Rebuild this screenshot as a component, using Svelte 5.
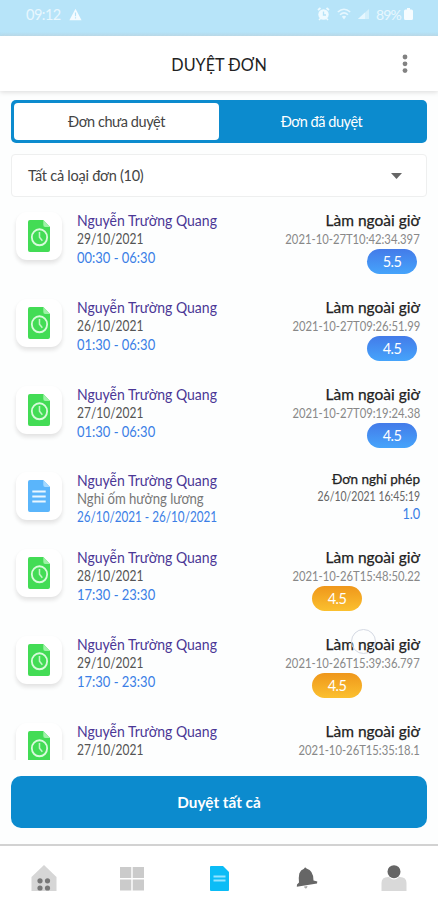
<script>
  const person = 'Nguyễn Trường Quang';
  const rows = [
    { date: '29/10/2021', time: '00:30 - 06:30', stamp: '2021-10-27T10:42:34.397', hours: '5.5', tone: 'blue' },
    { date: '26/10/2021', time: '01:30 - 06:30', stamp: '2021-10-27T09:26:51.99', hours: '4.5', tone: 'blue' },
    { date: '27/10/2021', time: '01:30 - 06:30', stamp: '2021-10-27T09:19:24.38', hours: '4.5', tone: 'blue' },
    { leave: true, date: 'Nghỉ ốm hưởng lương', time: '26/10/2021 - 26/10/2021', stamp: '26/10/2021 16:45:19', hours: '1.0' },
    { date: '28/10/2021', time: '17:30 - 23:30', stamp: '2021-10-26T15:48:50.22', hours: '4.5', tone: 'orange' },
    { date: '29/10/2021', time: '17:30 - 23:30', stamp: '2021-10-26T15:39:36.797', hours: '4.5', tone: 'orange', touch: true },
    { date: '27/10/2021', stamp: '2021-10-26T15:35:18.1' }
  ];
</script>

<div class="screen">
  <div class="status">
    <span class="clock">09:12</span>
    <svg class="warn" width="13" height="13" viewBox="0 0 13 13"><path d="M6.500 .8 12.600 12.200H.4Z" fill="#f4fbff" /><path d="M6.500 4.500V8.200M6.500 9.300v1.300" stroke="#b6e3f8" stroke-width="1.200" /></svg>
    <div class="signals">
      <svg width="13" height="14" viewBox="0 0 13 14"><path d="M1 3 3.500 1M12 3 9.500 1" stroke="#eefaff" stroke-width="1.800" /><circle cx="6.500" cy="7.500" r="5.200" fill="#eefaff" /><path d="M6.500 4.500V8H9" fill="none" stroke="#b6e3f8" stroke-width="1.300" /><path d="M2 13 4 11M11 13 9 11" stroke="#eefaff" stroke-width="1.500" /></svg>
      <svg width="14" height="12" viewBox="0 0 14 12"><g fill="none" stroke="#e6f7ff" stroke-width="1.500"><path d="M.8 4Q7-1.500 13.200 4" /><path d="M3 6.700Q7 3 11 6.700" /></g><path d="M4.800 8.500Q7 6.800 9.200 8.500L7 11.500Z" fill="#e6f7ff" /></svg>
      <svg width="11" height="12" viewBox="0 0 11 12"><path d="M0 11 11 1V11Z" fill="#d3effb" /><path d="M0 11 7 4.600V11Z" fill="#e6f7ff" /></svg>
      <span class="pct">89%</span>
      <svg width="9" height="12" viewBox="0 0 9 12"><path d="M3 0H6V1.500H7.500Q9 1.500 9 3V10.500Q9 12 7.500 12H1.500Q0 12 0 10.500V3Q0 1.500 1.500 1.500H3Z" fill="#f6fcff" /></svg>
    </div>
  </div>

  <header>
    <h1>DUYỆT ĐƠN</h1>
    <svg class="more" width="6" height="20" viewBox="0 0 6 20" fill="#828282"><circle cx="3" cy="3" r="2.400" /><circle cx="3" cy="9.800" r="2.400" /><circle cx="3" cy="16.600" r="2.400" /></svg>
  </header>

  <div class="tabs">
    <div class="tab active"><span>Đơn chưa duyệt</span></div>
    <div class="tab"><span>Đơn đã duyệt</span></div>
  </div>

  <div class="select">
    <span>Tất cả loại đơn (10)</span>
    <svg width="11" height="6" viewBox="0 0 11 6"><path d="M0 0H11L5.500 6Z" fill="#666" /></svg>
  </div>

  <div class="list">
    {#each rows as row}
      <div class="row" class:leave={row.leave}>
        <div class="tile">
          <svg width="22" height="32" viewBox="0 0 23 32" preserveAspectRatio="none">
            <path d="M2 0H16L23 7V30Q23 32 21 32H2Q0 32 0 30V2Q0 0 2 0Z" fill={row.leave ? '#5ab5fb' : '#43dc55'} />
            <path d="M16 0 23 7H18Q16 7 16 5Z" fill={row.leave ? '#a5d9ff' : '#a0f2a9'} />
            {#if row.leave}
              <path d="M4.500 11.500H18.500M4.500 16.500H18.500M4.500 21.500H18.500" stroke="#e9f7ff" stroke-width="2" />
            {:else}
              <circle cx="12" cy="17.300" r="8" fill="none" stroke="#d9fbdc" stroke-width="1.900" />
              <path d="M12 12V17.300L15 20.800" fill="none" stroke="#c4f6c9" stroke-width="1.600" />
            {/if}
          </svg>
        </div>
        <div class="info">
          <div class="name">{person}</div>
          <div class="date">{row.date}</div>
          {#if row.time}<div class="time">{row.time}</div>{/if}
        </div>
        <div class="meta">
          <div class="kind">{row.leave ? 'Đơn nghỉ phép' : 'Làm ngoài giờ'}{#if row.touch}<i class="touch"></i>{/if}</div>
          <div class="stamp">{row.stamp}</div>
          {#if row.leave}
            <div class="days">{row.hours}</div>
          {:else if row.hours}
            <div class="pill {row.tone}">{row.hours}</div>
          {/if}
        </div>
      </div>
    {/each}
  </div>

  <button>Duyệt tất cả</button>

  <nav>
    <div><svg width="26" height="27" viewBox="0 0 26 27"><path d="M13 0 25.500 12V26H.5V12Z" fill="#d6d6d6" /><g fill="#777"><circle cx="9" cy="15.800" r="2.600" /><circle cx="16.500" cy="15.800" r="2.600" /><circle cx="9" cy="23" r="2.600" /><circle cx="16.500" cy="23" r="2.600" /></g></svg></div>
    <div><svg width="24" height="27" viewBox="0 0 24 27" fill="#cbcbcb"><path d="M0 2H11.300V13H0ZM12.700 2H24V13H12.700ZM0 14.500H11.300V25.500H0ZM12.700 14.500H24V25.500H12.700Z" /></svg></div>
    <div><svg width="19" height="27" viewBox="0 0 19 27"><path d="M1 1H13L19 7V25Q19 26 18 26H1Q0 26 0 25V2Q0 1 1 1Z" fill="#0bbcf6" /><path d="M3.500 11.500H15.500M3.500 15.500H15.500" stroke="#94e4ff" stroke-width="2.200" /></svg></div>
    <div><svg width="22" height="27" viewBox="0 0 22 27"><path d="M8 21.500 11.500 21Q11 24 9.500 23.500Q8.300 23 8 21.500Z" fill="#aaa" /><path d="M8 3.800Q9.200 1.300 10.500 3.600Q17.500 5.500 17.500 15.500L21.300 16.500 21 18.500.8 21.800 1 19.500 3 17.500Q2.500 12 3.300 8.500Q4.500 5 8 3.800Z" fill="#666" /></svg></div>
    <div><svg width="26" height="27" viewBox="0 0 26 27"><path d="M.5 26V18Q.5 12 7 12H8Q13 17 18 12H19Q25.500 12 25.500 18V26Z" fill="#d9d9d9" /><circle cx="13" cy="6.700" r="6.500" fill="#666" /></svg></div>
  </nav>
</div>

<style>
  :global(body) { margin: 0; background: #fff; }
  .screen { width: 438px; height: 900px; display: flex; flex-direction: column; overflow: hidden; background: #fdfefe; font-family: Lato, "Open Sans", sans-serif; box-sizing: border-box; }
  .status { flex: none; height: 36px; box-sizing: border-box; background: linear-gradient(#b7e4f9 32px, #acd9ee 36px); display: flex; align-items: center; padding: 0 25px 8px 26px; color: #e8f7fe; font-size: 14.500px; }
  .clock { width: 43px; white-space: nowrap; letter-spacing: -.5px; }
  .signals { margin-left: auto; display: flex; align-items: center; gap: 7px; }
  .pct { width: 24px; margin-right: -3px; white-space: nowrap; font-size: 14px; letter-spacing: -.9px; }
  header { flex: none; height: 55px; display: flex; align-items: center; justify-content: center; position: relative; background: #fff; box-shadow: 0 1px 5px #d9d9d9; }
  h1 { margin: 0; font-size: 18px; font-weight: 400; color: #222; line-height: 24px; transform: scaleX(.9); }
  .more { position: absolute; right: 30px; top: 18px; }
  .tabs { flex: none; margin: 9px 11px 0; height: 43px; box-sizing: border-box; padding: 3px; border-radius: 5px; background: #0c8bce; display: flex; }
  .tab { flex: 1; display: flex; align-items: center; justify-content: center; color: #fff; font-size: 14.500px; letter-spacing: -.45px; }
  .active { flex: none; width: 205px; border-radius: 4px; background: #fff; color: #444; }
  .select { flex: none; margin: 11px 11px 0; height: 43px; box-sizing: border-box; border: 1px solid #eeefef; border-radius: 4px; background: #fff; display: flex; align-items: center; justify-content: space-between; padding: 0 24px 0 16px; font-size: 14.500px; letter-spacing: -.25px; color: #444; }
  .list { flex: none; height: 563px; overflow: hidden; box-sizing: border-box; padding: 13px 18px 0 16px; }
  .row { height: 86.800px; display: flex; }
  .leave { height: 77px; }
  .tile { flex: none; width: 46px; height: 48px; margin: 2px 15px 0 0; border-radius: 11px; background: #fff; box-shadow: 0 3px 4px #e2e2e2; display: flex; align-items: center; justify-content: center; }
  .info { flex: none; width: 150px; white-space: nowrap; }
  .info > div { width: max-content; transform-origin: left center; }
  .name { font-size: 16px; line-height: 20px; color: #4b3796; transform: scaleX(.876); }
  .date { font-size: 14.500px; line-height: 18px; color: #555; transform: scaleX(.825); }
  .time { font-size: 14.500px; line-height: 19px; color: #3b7ee6; transform: scaleX(.895); }
  .meta { flex: 1; min-width: 0; display: flex; flex-direction: column; align-items: flex-end; white-space: nowrap; }
  .kind { position: relative; font-size: 15.500px; line-height: 20px; color: #222; -webkit-text-stroke: .25px #222; }
  .stamp { font-size: 12.800px; line-height: 18px; color: #888; transform: scaleX(.88); transform-origin: right center; }
  .leave .date, .leave .time { line-height: 17.500px; }
  .leave .date { color: #777; transform: scaleX(.905); }
  .leave .time { transform: scaleX(.807); }
  .leave .kind { font-size: 13.500px; line-height: 18px; }
  .leave .stamp { line-height: 17px; color: #666; transform: scaleX(.82); }
  .days { font-size: 14.500px; line-height: 18px; color: #3b7ee6; transform: scaleX(.88); transform-origin: right center; }
  .pill { width: 50px; height: 25px; margin: 1px 3px 0 0; border-radius: 12.500px; color: #fff; font-size: 14.500px; line-height: 25px; letter-spacing: -.5px; text-align: center; }
  .blue { background: linear-gradient(#437be9, #46a4fb); }
  .orange { background: linear-gradient(#ef971b, #fbc02f); margin-right: 58px; }
  .touch { position: absolute; left: 25px; top: -5px; width: 23px; height: 23px; border: 1px solid #d4d9e3; border-radius: 50%; }
  button { flex: none; margin: 16px 11px 0; height: 52px; border: 0; border-radius: 10px; background: #0c8bce; color: #fff; font: 700 15.300px Lato, "Open Sans", sans-serif; }
  nav { flex: none; margin-top: 16px; height: 56px; box-sizing: border-box; border-top: 2px solid #d2d2d2; background: #fff; display: flex; justify-content: space-between; padding: 19px 31px 0; }
  nav div { width: 26px; display: flex; justify-content: center; }
  nav svg { display: block; }
</style>
